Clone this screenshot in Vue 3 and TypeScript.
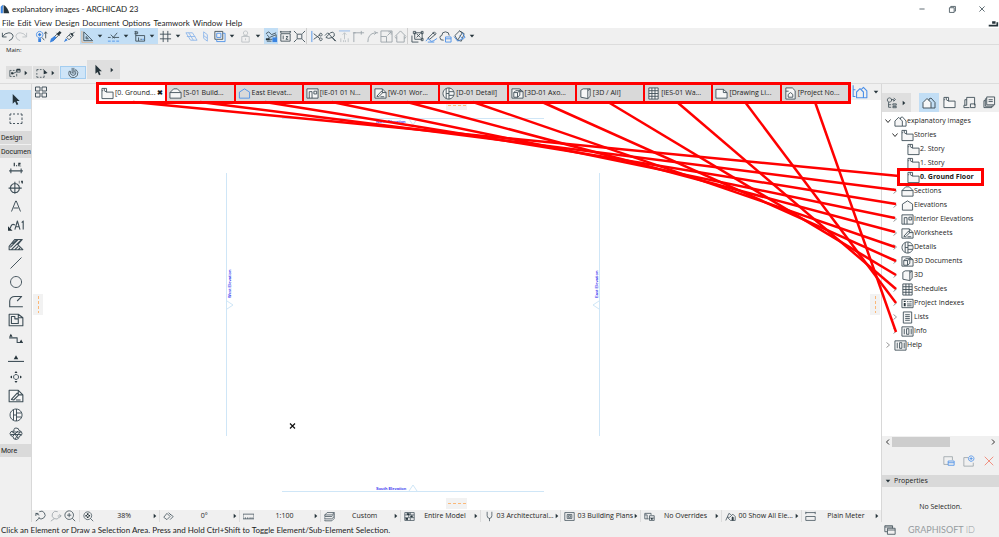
<script setup lang="ts">
import { defineComponent, h, ref } from 'vue'

type Kind = 's' | 'f' | 'b' | 'bf' | 'w' | 'g' | 'r' | 'o'
type Part = [Kind, string]

// s: outline, f: solid, b: blue outline, bf: blue solid, w: paper fill with outline, g: grey, r: red, o: orange
const paint: Record<Kind, { fill: string; stroke: string }> = {
  s: { fill: 'none', stroke: '#3d4d56' },
  f: { fill: '#26343b', stroke: 'none' },
  b: { fill: 'none', stroke: '#4a8fe8' },
  bf: { fill: '#3a83e0', stroke: 'none' },
  w: { fill: '#f7f7f7', stroke: '#3d4d56' },
  g: { fill: 'none', stroke: '#9aa3a8' },
  r: { fill: 'none', stroke: '#f08a7a' },
  o: { fill: 'none', stroke: '#e0b48c' },
}

const icons: Record<string, Part[]> = {
  logo: [['bf', 'M1 13V4L4 1V13Z'], ['f', 'M5 13V1Q11 5 13 13Z']],
  undo: [['s', 'M1.5 3V7.5H6M1.5 7.5Q4 3 8.5 3Q13 3.500 13 7Q12.500 10.500 8.500 11.500']],
  redo: [['g', 'M12.5 3V7.5H8M12.5 7.5Q10 3 5.5 3Q1 3.500 1 7Q1.500 10.500 5.500 11.500']],
  findSelect: [['b', 'M5 1.500A3.500 3.500 0 1 0 5.100 1.500'], ['bf', 'M5 3L7 5 5 7 3 5ZM3.500 9H6.500V13H3.500Z'], ['s', 'M7.500 8L10 11M11.500 9V2M10 4L11.500 2 13 4']],
  dropper: [['s', 'M3 10L8.500 4.500 10 6 4.500 11.500ZM8 3L11.500 6.500'], ['f', 'M8.500 4L11.500 1 13.500 3 10.500 6Z'], ['bf', 'M1 13.500L2 9.500 6 6.500 8 8 4.500 12Z']],
  syringe: [['s', 'M2 12L4 10M4 8L8 4 10.500 6.500 6.500 10.500ZM8 3L11.500 6.500M10 4.500L12.500 2M6.500 5.500L9 8'], ['bf', 'M1 13L3 9 5 11Z'], ['f', 'M8 4L10 3 11 5 10 6.500Z']],
  setSquare: [['o', 'M1 1V13.300H13'], ['s', 'M3 11.500V2L12.500 11.500ZM5.500 9.500V7L8 9.500Z']],
  guide: [['b', 'M1 12H4M5.500 12H8.500M10 12H13'], ['s', 'M1 8H4M6 8H13M4 5L8 9M6 9L11 3']],
  tracker: [['s', 'M3 1V12H6M1.500 2H5V4H1.500M3 6H12.500V12H6V8M8 10H9.500'], ['b', 'M10 10H12']],
  grid: [['s', 'M4.500 1V13M9.500 1V13M1 4.500H13M1 9.500H13']],
  planeA: [['b', 'M1 3L8 3 13 11 6 11ZM4 3L9 11M2 7H11']],
  planeB: [['b', 'M5 2L9 5V12L5 9ZM5 6L9 9']],
  frame: [['s', 'M2 1.500H10.500V10H2Z'], ['b', 'M4 3.500H8.500V8H4ZM10.500 3.500H13V12.500H4V10']],
  person: [['g', 'M7 1A2.300 2.300 0 1 0 7.100 1M3 13V7H11V13ZM5 7V6H9V7M7 9V11']],
  truck: [['s', 'M1 4L4 2 7 5 12 3M2 5L5 8 12 5V11M1 10H8M2 12H7M4 8V10'], ['bf', 'M8 8H13V13H8Z'], ['f', 'M1 9H5V11H1Z']],
  dimension: [['s', 'M1 2H13M2 4H12V12H2ZM2 1V3M12 1V3M4.500 6V10M7.500 7H9.500L7.500 10H10']],
  explode: [['s', 'M4.500 4.500H9.500V9.500H4.500ZM1 1L4 4M13 1L10 4M1 13L4 10M13 13L10 10']],
  trim: [['b', 'M2 1V13'], ['s', 'M4 4L11 9.500M4 10L11 5M11.500 3.500A1.500 1.500 0 1 0 11.600 3.500M11.500 8.500A1.500 1.500 0 1 0 11.600 8.500']],
  intersect: [['s', 'M1 6L4 3 6 5M2 8L7 3Q10 1 11 4Q12 7 9 8L5 9ZM9 8L13 12M6 5L12 12']],
  sumUp: [['b', 'M1 1H13'], ['g', 'M7 10V3M5 5L7 3 9 5M3 13V9M6 13V11M8 13V11M11 13V9']],
  corner: [['g', 'M2 13V3H13M10 1V5M1 3H4']],
  fillet: [['g', 'M2 13Q2 4 10 3H13M9 1L11 3 9 5']],
  resize: [['g', 'M1 1H13V13H1ZM1 7H7V13M8 6L12 2M9 2H12V5']],
  roof: [['g', 'M1 7L7 1 13 7M3 6V13H11V6M3 9L1 8M11 9L13 8']],
  group: [['s', 'M4 3H12V10H4ZM2.500 1.500H5V4H2.500ZM11 1.500H13V4H11ZM11 9H13V11.500H11ZM1 6V13H8M6 8L10 4M6 4L10 8']],
  pencilBlue: [['s', 'M3 9L10 2 12 4 5 10ZM8 3L11 5'], ['b', 'M1 12Q4 7 6 12Q8 13 13 9M3 13H10']],
  cloudBlue: [['s', 'M5 11Q1 11.500 1 8Q1 6 3 6Q3 2 7 2Q11 2 11 6'], ['b', 'M7 7.500H13V13H7ZM7 9.500H13']],
  hatchBlue: [['s', 'M2 6L7 1 10 3 5 11ZM7 1L12 4 9 12 5 11'], ['b', 'M1 7L5 12 13 8 10 3M7 6L11 10']],
  arrow: [['f', 'M4 1V11.500L6.500 9.200 8.200 13 10 12.200 8.300 8.500H11.500Z']],
  marquee: [['s', 'M1 2H2.500M4 2H6M8 2H10M11.500 2H13V4M13 5.500V8M13 9.500V11.500H11.500M10 11.500H8M6 11.500H4M2.500 11.500H1V9.500M1 8V5.500M1 4V2']],
  selectA: [['s', 'M1 4H3M4.500 4H6.500M8 4H9.500M1 4V11H3M4.500 11H7M9 11V8M9 3H13V6H9ZM4 8L10 5'], ['f', 'M2.500 6H5V8.500H2.500ZM9 2H13V4H9Z']],
  selectB: [['s', 'M1 3H3M4.500 3H6.500M1 3V5M1 7V9M1 10.500V12H3M4.500 12H6.500M8 12H9.500V10M8 3H9'], ['f', 'M9 3L13.500 7 9 8.500Z']],
  magnet: [['s', 'M2.500 5Q1 10 5 12Q9 13.500 12 10Q14 6 10.500 3L9 4.500Q11.500 7 9.500 9Q7 11 4.500 8.500L4 5ZM6 1V7M8 1V6M6 7H9']],
  quad: [['s', 'M1.500 2H6V6H1.500ZM8 2H12.500V6H8ZM1.500 8H6V12H1.500ZM8 8H12.500V12H8Z']],
  plan: [['w', 'M1 1.500H6V5.500H13V12.500H1Z'], ['s', 'M3.500 1.500V4L6 5.500M1 4H2']],
  section: [['w', 'M1 6L5 2H9L13 6V12H1ZM1 6H13']],
  elevation: [['w', 'M1.500 5.500L7 2 12.500 5.500V12H1.500Z']],
  elevationBlue: [['b', 'M1.500 5.500L7 2 12.500 5.500V12H1.500Z']],
  interior: [['w', 'M1 2H13V12H1Z'], ['s', 'M3.500 12V5H6.500V12M8.500 4.500H11.500V7.500H8.500Z']],
  worksheet: [['w', 'M1 2H9L13 6V12H1Z'], ['s', 'M3 10L8 4.500 9.500 6 5 10.500ZM7 10.500H11M9 2V6H13']],
  detail: [['w', 'M7 1A6 6 0 1 0 7.100 1'], ['s', 'M4.500 2V12M7.500 1V13M7.500 5H12.500M7.500 9H12.500M4.500 7H7.500']],
  doc3d: [['w', 'M1 2H9L13 5V12H1Z'], ['s', 'M3 6H7V11H3ZM3 6L5 4H9.500L7 6M9.500 4V9L7 11M10 2V5H13']],
  view3d: [['w', 'M2 3.500L4.500 2H12V10L9.500 12.500 2 11ZM9.500 2V12.500'], ['s', 'M9.500 4L12 2']],
  schedule: [['w', 'M2 1H12V13H2Z'], ['s', 'M5.300 1V13M8.600 1V13M2 4H12M2 7H12M2 10H12']],
  index: [['w', 'M1 2.500H13V11.500H1Z'], ['f', 'M3 4H5V5.500H3ZM3 6.500H5V10H3Z'], ['s', 'M6.500 5H8M9 5H11.500M6.500 7.500H11.500M6.500 9.500H11.500']],
  list: [['w', 'M2.500 1H11.500V13H2.500Z'], ['s', 'M4.500 4H9.500M4.500 6H9.500M4.500 8H9.500M4.500 10H9.500']],
  info: [['w', 'M1 2H13V12H1Z'], ['s', 'M3.500 4V10M6 4H8.500V10H6ZM11 4V10']],
  drawing: [['w', 'M1 2.500H9L13 6V12H1Z'], ['s', 'M9 2.500V6H13']],
  note: [['w', 'M2 1H9L12 4V13H2Z'], ['s', 'M4.500 8L7 6 9.500 8V11H4.500ZM2 4.500H5']],
  house: [['w', 'M1 6.500L5 2.500 9 6.500V12H1Z'], ['s', 'M7 4.500V3L9 2 13 6.500V12H9']],
  houseBlue: [['b', 'M1 1V11H3M1 5H3M4 7L7 4 10 7V12H4ZM8 5L10 3 13 6V12H10']],
  layouts: [['s', 'M4 1.500H12.500V10M4 1.500V10H1V12.500H7M4 4H2V10M8 8.500H13V12.500H8Z']],
  books: [['s', 'M4 1H12.500V9.500H4ZM4 3H2.500V11H11V9.500M2.500 5H1V12.500H9.500V11M6 4H10.500M6 6H10.500']],
  navigator: [['s', 'M4 1A2.500 2.500 0 1 0 4.100 1M6 3H9V5M3 6V12H6M3 9H6M8 8H12V9.500H8ZM8 11H12V12.500H8ZM9 1L11 3 9 5']],
  linear: [['s', 'M1 9.500H13M2.500 7.500V11.500M11.500 7.500V11.500'], ['f', 'M5 2.500H6V5.500H5ZM7 4.500H8V5.500H7ZM9 2.500H11V4H10V5H11.500V5.500H9Z']],
  level: [['s', 'M6 4A4 4 0 1 0 6.100 4M6 2.500V13M.500 8H12'], ['f', 'M9.500 1.500H10V4H9.500ZM11.500 1.500H13V4H12V3H11.500Z']],
  textA: [['s', 'M2.500 12.500L6.700 2H7.300L11.500 12.500M4.500 9H9.500']],
  label: [['s', 'M2 10Q3 5 6 7'], ['f', 'M0 8V12H4Z'], ['s', 'M6 11L8.200 3.500 10.500 11M7 8.500H9.500M12 5L13.300 3.500V11']],
  fill: [['s', 'M1 12L1 9 6 3H12.500L8.500 7.500 13 12ZM2 10L9 3M3 12L12 3M6 12L9 9M9 12L10.500 10.500M4 7L8 3']],
  line: [['s', 'M1.500 12.500L12.500 1.500']],
  circle: [['s', 'M7 1.500A5.500 5.500 0 1 0 7.100 1.500']],
  polyline: [['s', 'M1 12H13M1.500 12V7Q2 3 6 3H12L8 7']],
  zone: [['s', 'M1 2H9L13 5V12H1ZM3 4H6V6H9V10H3ZM9 2V5H13']],
  sectionTool: [['s', 'M1 6H8V10H13'], ['f', 'M1 5L2.500 2.500 4 5ZM10 10L11.500 7.500 13 10Z']],
  elevTool: [['s', 'M0 10H14'], ['f', 'M5 8L7 4.500 9 8Z']],
  interiorTool: [['s', 'M7 4.500A2.500 2.500 0 1 0 7.100 4.500'], ['f', 'M5.500 3L7 1 8.500 3ZM5.500 11L7 13 8.500 11ZM3 5.500L1 7 3 8.500ZM11 5.500L13 7 11 8.500Z']],
  hotspot: [['s', 'M5 2.500Q5 1 7 1Q10 1 10 3.500Q13 4 13 6.500Q13 9 10.500 9Q10 12.500 7 12.500Q4 12.500 4 9.500Q1 9 1 6.500Q1 4 5 4ZM3 5H12M2 7.500H12M4 9L9 4M6 12L11 5M4 5L9 11']],
  zoomBack: [['s', 'M5 2A4.500 4.500 0 1 1 4 9M5.500 9L1 13M4 4H1V7M1 4L5 6']],
  zoomNext: [['g', 'M9 2A4.500 4.500 0 1 0 11 8M5 10L1 13M9 7H13M11 5L13 7 11 9']],
  zoomIn: [['s', 'M6 1A5 5 0 1 0 6.100 1M9.500 9.500L13 13M6 3.500V8.500M3.500 6H8.500']],
  zoomFit: [['s', 'M6 1A5 5 0 1 0 6.100 1M9.500 9.500L13 13'], ['f', 'M5 3H7V5H5ZM5 7H7V9H5ZM3 5H5V7H3ZM7 5H9V7H7Z']],
  rotate: [['s', 'M1 8L5 3 9 7 5 11ZM9 4L13 7 9 11M7 2L10 5']],
  ruler: [['s', 'M0 4H14V10H0ZM3 8V10M6 8V10M9 8V10M11.500 8V10']],
  layers: [['s', 'M4 2H13L10 5H1ZM1 5V7H10L13 4V2M1 8V10H10L13 7M1 11V12.500H10L13 9.500V4']],
  model: [['s', 'M1 2H13V12H1ZM1 5H13M1 8.500H13M4 2V5M8 2V5M6 5V8M10 5V8M4 9V12M8 9V12'], ['f', 'M2 9H5V11H2ZM8 6H11V8H8ZM4 3H7V5H4Z']],
  pen: [['s', 'M4 1V6Q4 9 7 9.500Q10 9 10 6V1M7 9V13']],
  dims: [['s', 'M1 2H13V12H1ZM4 4.500H10V9.500H4ZM5.500 6H8.500V8H5.500Z']],
  override: [['s', 'M6 10H1V3H9V5M1 5H4V10M7 6H13V12H7ZM7 9H13'], ['f', 'M9 9H11V11H9Z']],
  renovate: [['s', 'M1 12L5 3 8 5M3 8L7 12H13V7L10 4 6 8ZM9 8V12'], ['f', 'M9 7L11 8V12H9Z']],
  meter: [['s', 'M1 2H13M1 1V4M13 1V4M1 7H13V12H1Z']],
  windows: [['s', 'M4 5H13V12H4ZM4 7H13M10 5V2H1V9H4M1 3.500H10']],
  saveView: [['g', 'M6 11H1V2H11V6'], ['b', 'M6 7H13V12H6ZM6 9H13']],
  addFolder: [['g', 'M6 3H1V13H12V9'], ['b', 'M9.500 1A3.200 3.200 0 1 0 9.600 1M9.500 2.500V6M7.700 4.200H11.300']],
  cross: [['r', 'M2 2L12 12M12 2L2 12']],
  min: [['s', 'M4 7H10']],
  restore: [['s', 'M4 5.500H9.500V11H4ZM5.500 5V4H11V9.500H10']],
  close: [['s', 'M4 4L10 10M10 4L4 10']],
  mdi: [['f', 'M2 9H13V11H2ZM6 5H10V8H6ZM11 6H13V9H11Z']],
  down: [['f', 'M3 5H11L7 9.500Z']],
  right: [['f', 'M4 2L10 7 4 12Z']],
}

const Icon = defineComponent({
  props: { name: { type: String, required: true }, size: { type: Number, default: 12 } },
  setup(props) {
    return () =>
      h(
        'svg',
        { class: 'icon', viewBox: '0 0 14 14', width: props.size, height: props.size, 'aria-hidden': 'true' },
        (icons[props.name] ?? []).map(([kind, d]) =>
          h('path', { d, ...paint[kind], 'stroke-width': kind === 'r' ? 1.1 : 0.95, 'stroke-linejoin': 'round' }),
        ),
      )
  },
})

const menus = ['File', 'Edit', 'View', 'Design', 'Document', 'Options', 'Teamwork', 'Window', 'Help']

interface ToolGroup { id: string; items: string[] }
const toolbar: ToolGroup[] = [
  { id: 'history', items: ['undo', 'redo'] },
  { id: 'pick', items: ['findSelect', 'dropper', 'syringe'] },
  { id: 'snap', items: ['setSquare', 'down', 'guide', 'down', 'tracker', 'down'] },
  { id: 'view', items: ['grid', 'down', 'planeA', 'planeB', 'frame', 'down', 'person', 'down', 'truck', 'dimension', 'explode'] },
  { id: 'edit', items: ['trim', 'intersect', 'sumUp', 'corner', 'fillet', 'resize', 'roof'] },
  { id: 'extra', items: ['group', 'pencilBlue', 'cloudBlue', 'hatchBlue', 'down'] },
]
const faded = new Set(['planeA', 'planeB', 'person', 'sumUp', 'redo'])

const tabs = [
  { icon: 'plan', label: '[0. Ground...' },
  { icon: 'section', label: '[S-01 Build...' },
  { icon: 'elevationBlue', label: 'East Elevat...' },
  { icon: 'interior', label: '[IE-01 01 N...' },
  { icon: 'worksheet', label: '[W-01 Wor...' },
  { icon: 'detail', label: '[D-01 Detail]' },
  { icon: 'doc3d', label: '[3D-01 Axo...' },
  { icon: 'view3d', label: '[3D / All]' },
  { icon: 'schedule', label: '[IES-01 Wa...' },
  { icon: 'drawing', label: '[Drawing Li...' },
  { icon: 'note', label: '[Project No...' },
]
const activeTab = ref(0)

const documentTools = [
  'linear', 'level', 'textA', 'label', 'fill', 'line', 'circle', 'polyline', 'zone',
  'sectionTool', 'elevTool', 'interiorTool', 'worksheet', 'detail', 'hotspot',
]
const largeTools = new Set(['linear', 'level', 'label', 'fill', 'polyline', 'zone', 'sectionTool', 'elevTool', 'worksheet'])

interface Node { icon: string; label: string; level: number; state: 'open' | 'closed' | 'leaf'; current?: boolean }
const tree: Node[] = [
  { icon: 'house', label: 'explanatory images', level: 0, state: 'open' },
  { icon: 'plan', label: 'Stories', level: 1, state: 'open' },
  { icon: 'plan', label: '2. Story', level: 2, state: 'leaf' },
  { icon: 'plan', label: '1. Story', level: 2, state: 'leaf' },
  { icon: 'plan', label: '0. Ground Floor', level: 2, state: 'leaf', current: true },
  { icon: 'section', label: 'Sections', level: 1, state: 'closed' },
  { icon: 'elevation', label: 'Elevations', level: 1, state: 'closed' },
  { icon: 'interior', label: 'Interior Elevations', level: 1, state: 'closed' },
  { icon: 'worksheet', label: 'Worksheets', level: 1, state: 'closed' },
  { icon: 'detail', label: 'Details', level: 1, state: 'closed' },
  { icon: 'doc3d', label: '3D Documents', level: 1, state: 'closed' },
  { icon: 'view3d', label: '3D', level: 1, state: 'closed' },
  { icon: 'schedule', label: 'Schedules', level: 1, state: 'closed' },
  { icon: 'index', label: 'Project Indexes', level: 1, state: 'closed' },
  { icon: 'list', label: 'Lists', level: 1, state: 'closed' },
  { icon: 'info', label: 'Info', level: 1, state: 'closed' },
  { icon: 'info', label: 'Help', level: 0, state: 'closed' },
]

const quick = [
  { icon: 'zoomFit', label: '38%' },
  { icon: 'rotate', label: '0°' },
  { icon: 'ruler', label: '1:100' },
  { icon: 'layers', label: 'Custom' },
  { icon: 'model', label: 'Entire Model' },
  { icon: 'pen', label: '03 Architectural...' },
  { icon: 'dims', label: '03 Building Plans' },
  { icon: 'override', label: 'No Overrides' },
  { icon: 'renovate', label: '00 Show All Ele...' },
  { icon: 'meter', label: 'Plain Meter' },
]

// each line joins a tab to its entry in the project tree
const links = [
  [133, 102, 899, 176], [200, 102, 896, 190], [265, 102, 896, 204], [332, 102, 895, 218],
  [407, 102, 895, 232], [473, 102, 895, 247], [542, 102, 896, 261], [608, 102, 896, 275],
  [677, 102, 896, 289], [745, 102, 896, 303], [815, 102, 896, 332],
]
</script>

<template>
  <div class="app">
    <header class="title-bar">
      <Icon name="logo" :size="10" />
      <h1>explanatory images - ARCHICAD 23</h1>
      <div class="window-buttons">
        <button v-for="b in ['min', 'restore', 'close']" :key="b" type="button" :aria-label="b"><Icon :name="b" :size="12" /></button>
      </div>
    </header>
    <nav class="menu-bar" aria-label="Menu">
      <button v-for="m in menus" :key="m" type="button">{{ m }}</button>
      <Icon class="menu-end" name="mdi" :size="12" />
    </nav>

    <div class="toolbar" role="toolbar" aria-label="Standard">
      <div v-for="g in toolbar" :key="g.id" class="tool-group" :class="g.id">
        <button
          v-for="(t, i) in g.items"
          :key="i"
          type="button"
          :aria-label="t"
          :class="{ drop: t === 'down', lit: t === 'truck', faded: faded.has(t) }"
        ><Icon :name="t" :size="t === 'down' ? 8 : 13" /></button>
      </div>
    </div>

    <section class="info-box">
      <p>Main:</p>
      <div class="info-buttons">
        <button type="button" aria-label="Quick selection"><Icon name="selectA" /><Icon name="right" :size="6" /></button>
        <button type="button" aria-label="Marquee"><Icon name="selectB" /><Icon name="right" :size="6" /></button>
        <button type="button" class="on" aria-label="Magnet"><Icon name="magnet" /></button>
        <button type="button" class="tall" aria-label="Arrow tool"><Icon name="arrow" /><Icon name="right" :size="6" /></button>
      </div>
    </section>

    <div class="workspace">
      <aside class="toolbox" aria-label="Toolbox">
        <button type="button" class="on" aria-label="Arrow"><Icon name="arrow" :size="13" /></button>
        <button type="button" aria-label="Marquee"><Icon name="marquee" :size="14" /></button>
        <h2 class="first">Design</h2>
        <h2>Documen</h2>
        <button v-for="t in documentTools" :key="t" type="button" :aria-label="t">
          <Icon :name="t" :size="largeTools.has(t) ? 16 : 14" />
        </button>
        <h2>More</h2>
      </aside>

      <main class="centre">
        <div class="tab-bar">
          <button type="button" class="overview" aria-label="Tab overview"><Icon name="quad" :size="14" /></button>
          <div class="tabs" role="tablist">
            <button
              v-for="(t, i) in tabs"
              :key="t.label"
              type="button"
              role="tab"
              :aria-selected="i === activeTab"
              :class="{ active: i === activeTab }"
              @click="activeTab = i"
            >
              <Icon :name="t.icon" :size="13" /><span>{{ t.label }}</span><b v-if="i === activeTab">✖</b>
            </button>
          </div>
          <button type="button" class="tab-end" aria-label="Navigator options"><Icon name="houseBlue" :size="16" /><Icon name="down" :size="8" /></button>
        </div>

        <svg class="plan" viewBox="32 100 849 410" preserveAspectRatio="none" role="img" aria-label="Ground floor plan">
          <g class="guides">
            <path d="M226.500 173V436M599.500 173V436M282 118.500H544M282 491.500H544" />
            <path d="M227 301L233 305 227 309M599 301L593 305 599 309M409 491L413 485 417 491M409 119L413 125 417 119" />
          </g>
          <g class="marks">
            <text x="376" y="123">North Elevation</text>
            <text x="376" y="490">South Elevation</text>
            <text transform="translate(231 298) rotate(-90)">West Elevation</text>
            <text transform="translate(598 298) rotate(-90)">East Elevation</text>
          </g>
          <g class="handles">
            <rect x="446" y="101" width="21" height="9" /><rect x="446" y="498" width="21" height="11" />
            <rect x="33" y="294" width="10" height="21" /><rect x="870" y="294" width="10" height="21" />
            <path d="M448 105.500H466M448 503.500H466M38.500 296V313M875.500 296V313" />
          </g>
          <path class="origin" d="M290 423.500L295 428.500M295 423.500L290 428.500" />
        </svg>

        <div class="quick-bar">
          <div class="zooms">
            <button v-for="z in ['zoomBack', 'zoomNext', 'zoomIn']" :key="z" type="button" :aria-label="z"><Icon :name="z" :size="12" /></button>
          </div>
          <button v-for="q in quick" :key="q.label" type="button" class="quick">
            <Icon :name="q.icon" :size="11" /><span>{{ q.label }}</span><Icon name="right" :size="6" />
          </button>
        </div>
      </main>

      <aside class="navigator">
        <div class="nav-head">
          <button type="button" class="chooser" aria-label="Project chooser"><Icon name="navigator" /><Icon name="right" :size="6" /></button>
          <div class="maps">
            <button type="button" class="on" aria-label="Project map"><Icon name="house" :size="14" /></button>
            <button type="button" aria-label="View map"><Icon name="plan" :size="13" /></button>
            <button type="button" aria-label="Layout book"><Icon name="layouts" :size="13" /></button>
            <button type="button" aria-label="Publisher sets"><Icon name="books" :size="13" /></button>
          </div>
        </div>
        <ul class="tree">
          <li v-for="n in tree" :key="n.label" :class="['level-' + n.level, { current: n.current }]">
            <svg class="chevron" :class="n.state" viewBox="0 0 8 8" aria-hidden="true">
              <path v-if="n.state === 'open'" d="M1.500 2.500L4 5.500 6.500 2.500" />
              <path v-else-if="n.state === 'closed'" d="M2.500 1.500L5.500 4 2.500 6.500" />
            </svg>
            <Icon :name="n.icon" :size="13" /><span>{{ n.label }}</span>
          </li>
        </ul>
        <div class="scroller">
          <svg viewBox="0 0 8 8"><path d="M5 1.500L2.500 4 5 6.500" /></svg>
          <div class="track"><i /></div>
          <svg viewBox="0 0 8 8"><path d="M3 1.500L5.500 4 3 6.500" /></svg>
        </div>
        <div class="nav-actions">
          <button v-for="a in ['saveView', 'addFolder', 'cross']" :key="a" type="button" :aria-label="a"><Icon :name="a" /></button>
        </div>
        <h2><Icon name="down" :size="8" />Properties</h2>
        <p>No Selection.</p>
      </aside>
    </div>

    <footer class="status">
      <span>Click an Element or Draw a Selection Area. Press and Hold Ctrl+Shift to Toggle Element/Sub-Element Selection.</span>
      <div class="brand"><Icon name="windows" /><strong>GRAPHISOFT <em>ID</em></strong></div>
    </footer>

    <svg class="links" viewBox="0 0 999 537" preserveAspectRatio="none" aria-hidden="true">
      <line v-for="(l, i) in links" :key="i" :x1="l[0]" :y1="l[1]" :x2="l[2]" :y2="l[3]" />
    </svg>
  </div>
</template>

<style>
body {
  margin: 0;
}
</style>

<style scoped>
.app {
  position: relative;
  display: flex;
  flex-direction: column;
  min-height: 100vh;
  background: #f0f0f0;
  color: #1c1c1c;
  font: 7px/10px "Open Sans", "Noto Sans", sans-serif;
}
button {
  display: flex;
  align-items: center;
  justify-content: center;
  padding: 0;
  border: 0;
  background: none;
  color: inherit;
  font: inherit;
}
h1, h2, p, ul {
  margin: 0;
  padding: 0;
  font: inherit;
}
svg {
  flex: none;
  display: block;
}
.title-bar,
.menu-bar,
.status {
  font-family: Lato, "Open Sans", sans-serif;
  font-size: 8px;
}
.title-bar {
  display: flex;
  align-items: center;
  gap: 2px;
  height: 18px;
  background: #fff;
}
.window-buttons {
  display: flex;
  margin-left: auto;
  padding-right: 2px;
}
.window-buttons button {
  width: 30px;
}
.menu-bar {
  display: flex;
  align-items: center;
  gap: 3px;
  height: 10px;
  padding-left: 2px;
  background: #fff;
}
.menu-end {
  margin-left: auto;
}
.toolbar {
  display: flex;
  height: 16px;
  border-bottom: 1px solid #dcdcdc;
}
.tool-group {
  display: flex;
}
.tool-group button {
  width: 14px;
}
.tool-group .drop {
  width: 12px;
}
.tool-group .lit,
.tool-group.snap {
  background: #c2def5;
}
.tool-group .faded {
  opacity: 0.6;
}
.tool-group.pick {
  padding: 0 4px 0 6px;
}
.tool-group.edit,
.tool-group.extra {
  padding-left: 2px;
  border-left: 1px solid #cfcfcf;
}
.info-box {
  height: 39px;
  box-sizing: border-box;
  padding: 0 6px;
  border-bottom: 1px solid #dcdcdc;
}
.info-box p {
  font-size: 6px;
}
.info-buttons {
  display: flex;
  align-items: flex-end;
  gap: 1px;
  padding-top: 5px;
}
.info-buttons button {
  width: 26px;
  height: 13px;
  justify-content: space-evenly;
  background: #dfdfdf;
}
.info-buttons .tall {
  width: 33px;
  height: 19px;
}
.info-buttons .on {
  background: #cfe5f8;
  outline: 1px solid #a3cdf0;
  outline-offset: -1px;
}
.workspace {
  flex: 1;
  display: flex;
}
.toolbox {
  width: 31px;
  padding-top: 6px;
  border-right: 1px solid #d8d8d8;
}
.toolbox button {
  width: 31px;
  height: 19px;
}
.toolbox .on {
  background: #c2def5;
}
.toolbox h2 {
  height: 13px;
  margin-top: 1px;
  padding-left: 1px;
  background: #dadada;
  font-family: Roboto, "Open Sans", sans-serif;
  line-height: 14px;
}
.toolbox .first {
  margin-top: 3px;
}
.centre {
  flex: 1;
  display: flex;
  flex-direction: column;
  min-width: 0;
}
.tab-bar {
  display: flex;
  height: 16px;
}
.overview {
  width: 18px;
}
.tabs {
  flex: 1;
  display: flex;
  gap: 2px;
  height: 16px;
  margin: -2px 0 0 46px;
  border: 3px solid #f00;
  background: #f00;
  z-index: 1;
}
.tabs button {
  flex: 1 1 0;
  min-width: 0;
  justify-content: flex-start;
  gap: 1px;
  padding-left: 2px;
  background: #d9d9d9;
  white-space: nowrap;
}
.tabs .active {
  background: #fff;
}
.tabs b {
  margin-left: auto;
  padding-right: 4px;
}
.tab-end {
  width: 30px;
  gap: 4px;
}
.plan {
  flex: 1;
  width: 100%;
  min-height: 0;
  height: 0;
  background: #fff;
}
.guides path {
  fill: none;
  stroke: #cfe6f7;
  stroke-width: 1;
}
.marks text {
  fill: #3a3af0;
  font: bold 4px "Liberation Sans", sans-serif;
}
.handles rect {
  fill: #f2f2f2;
}
.handles path {
  fill: none;
  stroke: #fbb878;
  stroke-width: 1;
  stroke-dasharray: 3 2;
}
.origin {
  stroke: #111;
  stroke-width: 1.2;
}
.quick-bar {
  display: flex;
  height: 12px;
}
.zooms {
  display: flex;
  width: 47px;
  justify-content: space-evenly;
}
.quick {
  flex: 1 1 0;
  min-width: 0;
  padding: 0 1px 0 3px;
  border-left: 1px solid #dcdcdc;
  white-space: nowrap;
}
.quick span {
  flex: 1;
  padding-left: 2px;
  text-align: center;
}
.navigator {
  display: flex;
  flex-direction: column;
  width: 117px;
  border-left: 1px solid #d8d8d8;
}
.nav-head {
  display: flex;
  justify-content: space-between;
  align-items: flex-end;
  height: 28px;
}
.nav-head button {
  width: 20px;
  height: 19px;
}
.nav-head .chooser {
  width: 29px;
  gap: 3px;
  background: #dfdfdf;
}
.maps {
  display: flex;
}
.maps .on {
  background: #c2def5;
}
.tree {
  flex: 1;
  background: #fff;
  list-style: none;
  padding-top: 2px;
}
.tree li {
  display: flex;
  align-items: center;
  height: 14px;
  padding-left: 2px;
  white-space: nowrap;
}
.tree .level-1 {
  padding-left: 9px;
}
.tree .level-2 {
  padding-left: 15px;
}
.tree .current {
  width: 83px;
  box-sizing: border-box;
  margin-left: 17px;
  padding-left: 0;
  outline: 3px solid #f00;
  outline-offset: -1px;
  font-weight: 700;
}
.tree .current .chevron {
  width: 6px;
}
.chevron {
  width: 8px;
  height: 8px;
  margin-right: 2px;
}
.chevron path,
.scroller path {
  fill: none;
  stroke: #333;
  stroke-width: 1;
}
.chevron.closed path {
  stroke: #999;
}
.scroller {
  display: flex;
  align-items: center;
  height: 11px;
  padding: 0 2px;
}
.scroller svg {
  width: 8px;
  height: 8px;
}
.track {
  flex: 1;
}
.track i {
  display: block;
  width: 60%;
  height: 10px;
  background: #cdcdcd;
}
.nav-actions {
  display: flex;
  justify-content: flex-end;
  gap: 8px;
  height: 28px;
  padding-right: 4px;
}
.navigator h2 {
  display: flex;
  align-items: center;
  gap: 2px;
  height: 12px;
  padding-left: 2px;
  background: #d9d9d9;
}
.navigator p {
  height: 35px;
  line-height: 40px;
  text-align: center;
}
.status {
  display: flex;
  justify-content: space-between;
  align-items: center;
  height: 15px;
  padding-left: 1px;
}
.brand {
  display: flex;
  align-items: center;
  gap: 12px;
  width: 115px;
}
.brand strong {
  color: #969ca0;
  font: 9px/12px Lato, sans-serif;
}
.brand em {
  font-style: normal;
  font-weight: 300;
}
.links {
  position: absolute;
  inset: 0;
  width: 100%;
  height: 100%;
  pointer-events: none;
  z-index: 2;
}
.links line {
  stroke: #f00;
  stroke-width: 2.5;
}
</style>
